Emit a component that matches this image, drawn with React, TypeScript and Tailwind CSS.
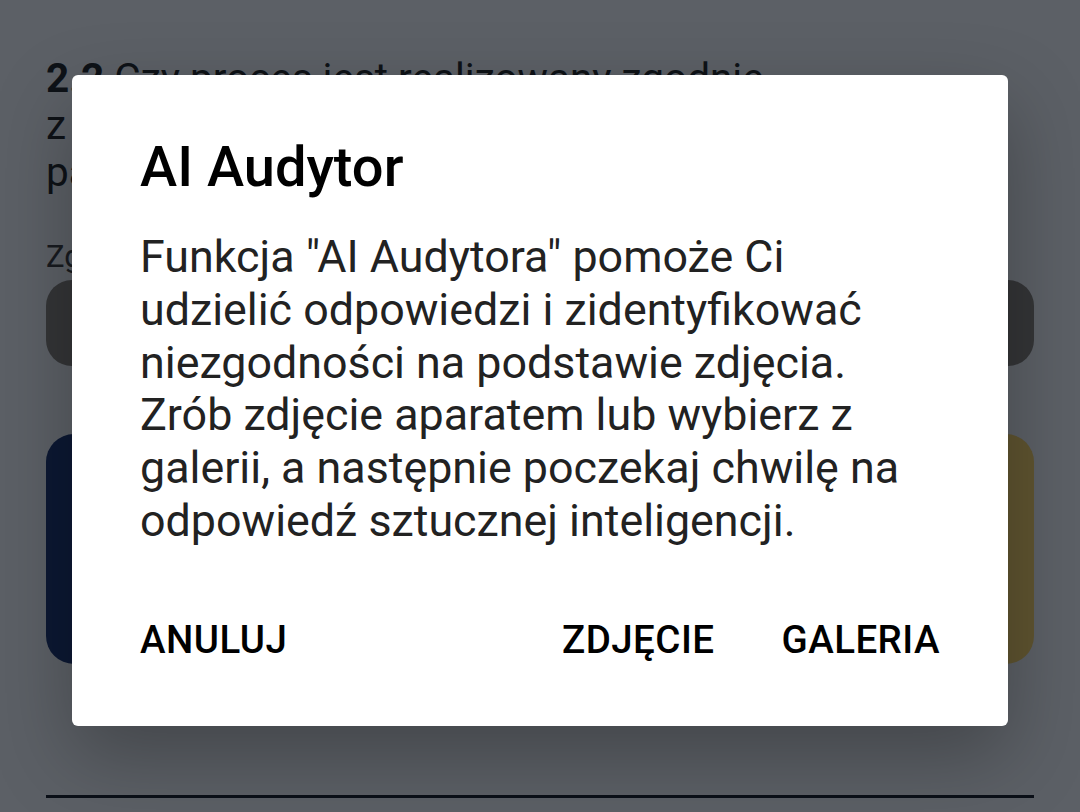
import React from 'react';

const font = { fontFamily: 'Roboto, "Noto Sans", sans-serif' };

const BackgroundScreen: React.FC = () => (
  <div className="flex flex-col px-[46px] pt-[55px]">
    <p className="text-[40.5px] leading-[47px] text-[#0e1217]">
      <span className="font-bold">2.2</span> Czy proces jest realizowany zgodnie
      <br />z obowiązującymi procedurami i
      <br />parametrami technologicznymi?
    </p>
    <p className="mt-[42px] text-[31px] leading-[37px] text-[#181b20]">Zgodność</p>
    <div className="mt-[5px] h-[86px] rounded-[26px] bg-[#343537]" />
    <div className="mt-[68px] grid grid-cols-2 gap-[24px]">
      <div className="h-[230px] rounded-[28px] bg-[#0c1833]" />
      <div className="h-[230px] rounded-[28px] bg-[#5f5430]" />
    </div>
    <div className="mt-[131px] h-[3px] bg-[#0b1018]" />
  </div>
);

const DialogButton: React.FC<{ label: string }> = ({ label }) => (
  <button className="h-[99px] px-[22px] text-[38.5px] font-medium uppercase tracking-[0.012em] text-black">
    {label}
  </button>
);

export default function App() {
  return (
    <div className="relative h-[812px] w-[1080px] overflow-hidden bg-[#5c6066]" style={font}>
      <BackgroundScreen />

      {/* dialog over dimmed screen */}
      <div className="absolute inset-0 flex items-start justify-center pt-[75px]">
        <div className="w-[936px] rounded-[6px] bg-white pt-[59px] pb-[36px] shadow-[0_30px_80px_rgba(0,0,0,0.28)]">
          <h2 className="px-[68px] text-[56px] font-medium leading-[66px] text-black">AI Audytor</h2>
          <p className="mt-[31px] pl-[68px] pr-[80px] text-[44.8px] leading-[52.8px] text-[#222222]">
            Funkcja "AI Audytora" pomoże Ci udzielić odpowiedzi i zidentyfikować niezgodności na
            podstawie zdjęcia. Zrób zdjęcie aparatem lub wybierz z galerii, a następnie poczekaj
            chwilę na odpowiedź sztucznej inteligencji.
          </p>
          <div className="mt-[43px] flex items-center px-[46px]">
            <DialogButton label="Anuluj" />
            <div className="flex-1" />
            <div className="flex gap-[23px]">
              <DialogButton label="Zdjęcie" />
              <DialogButton label="Galeria" />
            </div>
          </div>
        </div>
      </div>
    </div>
  );
}
